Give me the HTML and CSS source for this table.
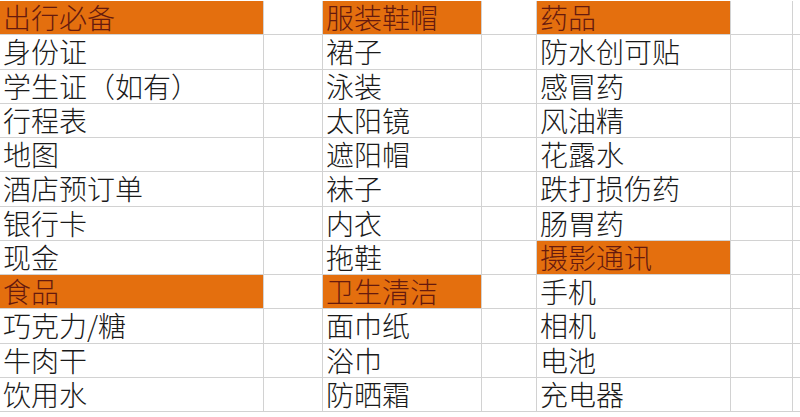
FILE: index.html
```html
<!DOCTYPE html>
<html lang="zh-CN">
<head>
<meta charset="utf-8">
<title>旅行清单</title>
<link rel="stylesheet" href="styles.css">
</head>
<body>
<div class="sheet">
  <div class="c h">出行必备</div><div class="c"></div><div class="c h">服装鞋帽</div><div class="c"></div><div class="c h">药品</div><div class="c"></div><div class="c e"></div>
  <div class="c">身份证</div><div class="c"></div><div class="c">裙子</div><div class="c"></div><div class="c">防水创可贴</div><div class="c"></div><div class="c e"></div>
  <div class="c">学生证（如有）</div><div class="c"></div><div class="c">泳装</div><div class="c"></div><div class="c">感冒药</div><div class="c"></div><div class="c e"></div>
  <div class="c">行程表</div><div class="c"></div><div class="c">太阳镜</div><div class="c"></div><div class="c">风油精</div><div class="c"></div><div class="c e"></div>
  <div class="c">地图</div><div class="c"></div><div class="c">遮阳帽</div><div class="c"></div><div class="c">花露水</div><div class="c"></div><div class="c e"></div>
  <div class="c">酒店预订单</div><div class="c"></div><div class="c">袜子</div><div class="c"></div><div class="c">跌打损伤药</div><div class="c"></div><div class="c e"></div>
  <div class="c">银行卡</div><div class="c"></div><div class="c">内衣</div><div class="c"></div><div class="c">肠胃药</div><div class="c"></div><div class="c e"></div>
  <div class="c">现金</div><div class="c"></div><div class="c">拖鞋</div><div class="c"></div><div class="c h">摄影通讯</div><div class="c"></div><div class="c e"></div>
  <div class="c h">食品</div><div class="c"></div><div class="c h">卫生清洁</div><div class="c"></div><div class="c">手机</div><div class="c"></div><div class="c e"></div>
  <div class="c">巧克力/糖</div><div class="c"></div><div class="c">面巾纸</div><div class="c"></div><div class="c">相机</div><div class="c"></div><div class="c e"></div>
  <div class="c">牛肉干</div><div class="c"></div><div class="c">浴巾</div><div class="c"></div><div class="c">电池</div><div class="c"></div><div class="c e"></div>
  <div class="c">饮用水</div><div class="c"></div><div class="c">防晒霜</div><div class="c"></div><div class="c">充电器</div><div class="c"></div><div class="c e"></div>
</div>
</body>
</html>
```

FILE: styles.css
```css
html, body {
  margin: 0;
  padding: 0;
  background: #ffffff;
}

.sheet {
  display: grid;
  grid-template-columns: 264px 59px 159px 55px 194px 62px 1fr;
  grid-template-rows: repeat(12, 1fr);
  height: 411px;
  margin-top: 1px;
  width: 800px;
  font-family: "Noto Sans CJK SC", "Noto Sans", sans-serif;
  font-size: 28px;
  font-weight: 300;
  color: #1a1a1a;
}

.c {
  display: flex;
  align-items: center;
  padding-left: 3px;
  border-right: 1px solid #d2d2d2;
  border-bottom: 1px solid #d2d2d2;
  line-height: 1.1;
  white-space: nowrap;
}

.c.e {
  border-right: none;
}

.c.h {
  background: #e46f0e;
  color: #661a0e;
}
```
